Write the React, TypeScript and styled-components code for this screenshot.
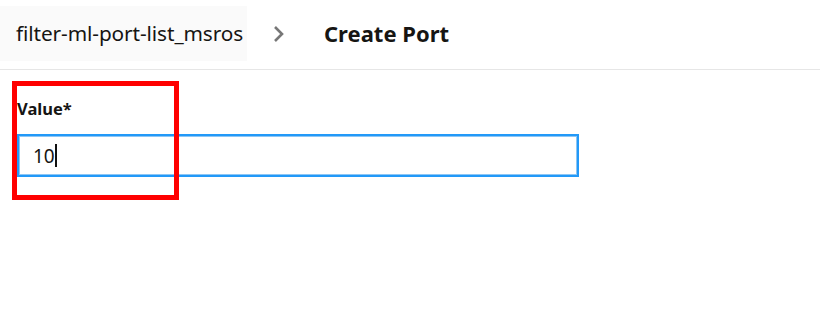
import styled, { createGlobalStyle } from "styled-components";

const GlobalStyle = createGlobalStyle`
  html, body {
    margin: 0;
    padding: 0;
    background: #ffffff;
    font-family: "Noto Sans", "Open Sans", sans-serif;
    color: #161513;
  }
`;

const App = () => {
  return (
    <S.Page>
      <GlobalStyle />
      <S.Header>
        <S.Crumb>filter-ml-port-list_msros</S.Crumb>
        <S.Chevron viewBox="0 0 12 18" aria-hidden>
          <path d="M2 2l7 7-7 7" fill="none" stroke="#777" strokeWidth="2.6" />
        </S.Chevron>
        <S.Title>Create Port</S.Title>
      </S.Header>
      <S.Form>
        <S.Label>Value*</S.Label>
        <S.InputBox>
          <S.Value>10</S.Value>
          <S.Caret />
        </S.InputBox>
        <S.Highlight />
      </S.Form>
    </S.Page>
  );
};

const S = {
  Page: styled.div`
    width: 820px;
    height: 319px;
    overflow: hidden;
  `,
  Header: styled.div`
    height: 70px;
    box-sizing: border-box;
    border-bottom: 1px solid #e6e6e6;
    display: flex;
    align-items: center;
  `,
  Crumb: styled.div`
    height: 55px;
    width: 247px;
    box-sizing: border-box;
    padding-left: 16px;
    background: #fafafa;
    display: flex;
    align-items: center;
    font-size: 20.8px;
    letter-spacing: -0.1px;
    margin-top: -3px;
  `,
  Chevron: styled.svg`
    width: 12px;
    height: 18px;
    margin-left: 26px;
    margin-top: -2px;
  `,
  Title: styled.div`
    margin-left: 39px;
    font-size: 22px;
    font-weight: 700;
    margin-top: -4px;
  `,
  Form: styled.div`
    position: relative;
    padding: 29px 0 0 17px;
  `,
  Label: styled.div`
    font-size: 16.5px;
    font-weight: 700;
    line-height: 20px;
    margin-bottom: 15px;
  `,
  InputBox: styled.div`
    width: 562px;
    height: 43px;
    box-sizing: border-box;
    border: 2px solid #2299f8;
    box-shadow: inset 0 0 0 1px #8cc6f5;
    display: flex;
    align-items: center;
    padding-left: 14px;
  `,
  Value: styled.span`
    font-size: 19px;
  `,
  Caret: styled.span`
    width: 2px;
    height: 23px;
    background: #111;
  `,
  Highlight: styled.div`
    position: absolute;
    left: 12px;
    top: 11px;
    width: 167px;
    height: 119px;
    box-sizing: border-box;
    border: 5px solid #ff0000;
    pointer-events: none;
  `,
};

export default App;
